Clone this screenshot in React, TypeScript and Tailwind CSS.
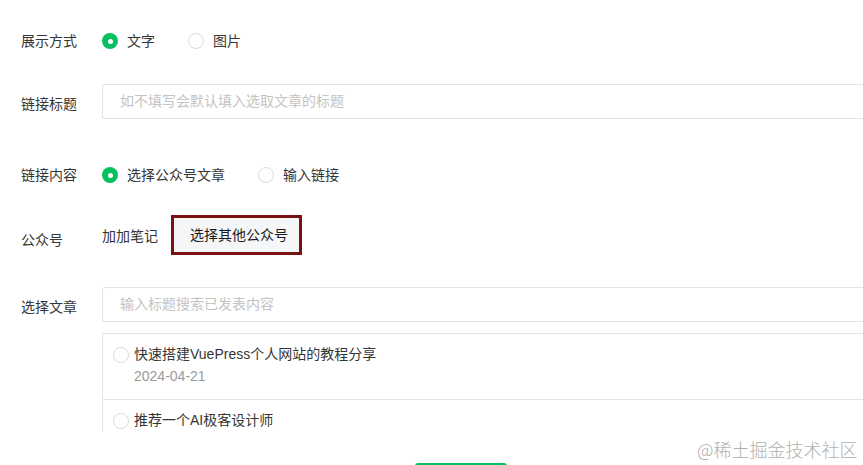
import React from "react";

const font = { fontFamily: '"Liberation Sans", "Noto Sans CJK SC", sans-serif' };

function Radio({ checked }: { checked?: boolean }) {
  return checked ? (
    <span className="flex h-[16px] w-[16px] shrink-0 items-center justify-center rounded-full bg-[#07c160]">
      <span className="block h-[5px] w-[5px] rounded-full bg-white" />
    </span>
  ) : (
    <span className="block h-[16px] w-[16px] shrink-0 rounded-full border border-[#dcdcdc] bg-white" />
  );
}

export default function App() {
  return (
    <div
      className="relative h-[465px] w-[863px] overflow-hidden bg-white text-[14px] text-[#353535]"
      style={font}
    >
      <div className="pl-[21px] pt-[25px]">
        {/* Row 1 */}
        <div className="flex items-start">
          <div className="w-[81px] leading-8">展示方式</div>
          <div className="flex h-8 items-center">
            <Radio checked />
            <span className="ml-[9px]">文字</span>
            <span className="ml-[33px] flex">
              <Radio />
            </span>
            <span className="ml-[9px]">图片</span>
          </div>
        </div>

        {/* Row 2 */}
        <div className="mt-[27px] flex items-start">
          <div className="w-[81px] pt-[10px] leading-5">链接标题</div>
          <div className="flex h-[35px] flex-1 items-center rounded-l-[3px] border border-r-0 border-[#e3e3e3] pl-[17px] text-[#c4c4c4]">
            如不填写会默认填入选取文章的标题
          </div>
        </div>

        {/* Row 3 */}
        <div className="mt-[40px] flex items-start">
          <div className="w-[81px] leading-8">链接内容</div>
          <div className="flex h-8 items-center">
            <Radio checked />
            <span className="ml-[9px]">选择公众号文章</span>
            <span className="ml-[33px] flex">
              <Radio />
            </span>
            <span className="ml-[9px]">输入链接</span>
          </div>
        </div>

        {/* Row 4 */}
        <div className="mt-[24px] flex items-start">
          <div className="w-[81px] pt-[15px] leading-5">公众号</div>
          <div className="flex h-[40px] items-center">
            <span className="pt-[2px]">加加笔记</span>
            <div className="ml-[13px] flex h-[40px] w-[131px] items-center border-[3px] border-[#7b1212] bg-[#f5f6f7] pl-[16px] text-[#1a1a1a]">
              选择其他公众号
            </div>
          </div>
        </div>

        {/* Row 5 */}
        <div className="mt-[32px] flex items-start">
          <div className="w-[81px] pt-[10px] leading-5">选择文章</div>
          <div className="flex-1">
            <div className="flex h-[35px] items-center rounded-l-[3px] border border-r-0 border-[#e3e3e3] pl-[17px] text-[#c4c4c4]">
              输入标题搜索已发表内容
            </div>
            <div className="mt-[11px] h-[99px] overflow-hidden border-l border-t border-[#e3e3e3]">
              <div className="flex h-[66px] items-start border-b border-[#e3e3e3] pl-[10px] pt-[9px]">
                <span className="mt-[4px] flex">
                  <Radio />
                </span>
                <div className="ml-[5px] leading-[22px]">
                  <div>快速搭建VuePress个人网站的教程分享</div>
                  <div className="text-[#9a9a9a]">2024-04-21</div>
                </div>
              </div>
              <div className="flex items-start pl-[10px] pt-[9px]">
                <span className="mt-[4px] flex">
                  <Radio />
                </span>
                <div className="ml-[5px] leading-[22px]">推荐一个AI极客设计师</div>
              </div>
            </div>
          </div>
        </div>

        {/* Bottom button top */}
        <div className="ml-[394px] mt-[31px] h-[10px] w-[92px] rounded-t-[3px] border-t-2 border-[#07c160]" />
      </div>

      <div
        className="absolute left-[697px] top-[436px] text-[18px] font-light text-[#b0b0b0]"
        style={{ fontFamily: '"Noto Sans CJK SC", sans-serif' }}
      >
        @稀土掘金技术社区
      </div>
    </div>
  );
}
